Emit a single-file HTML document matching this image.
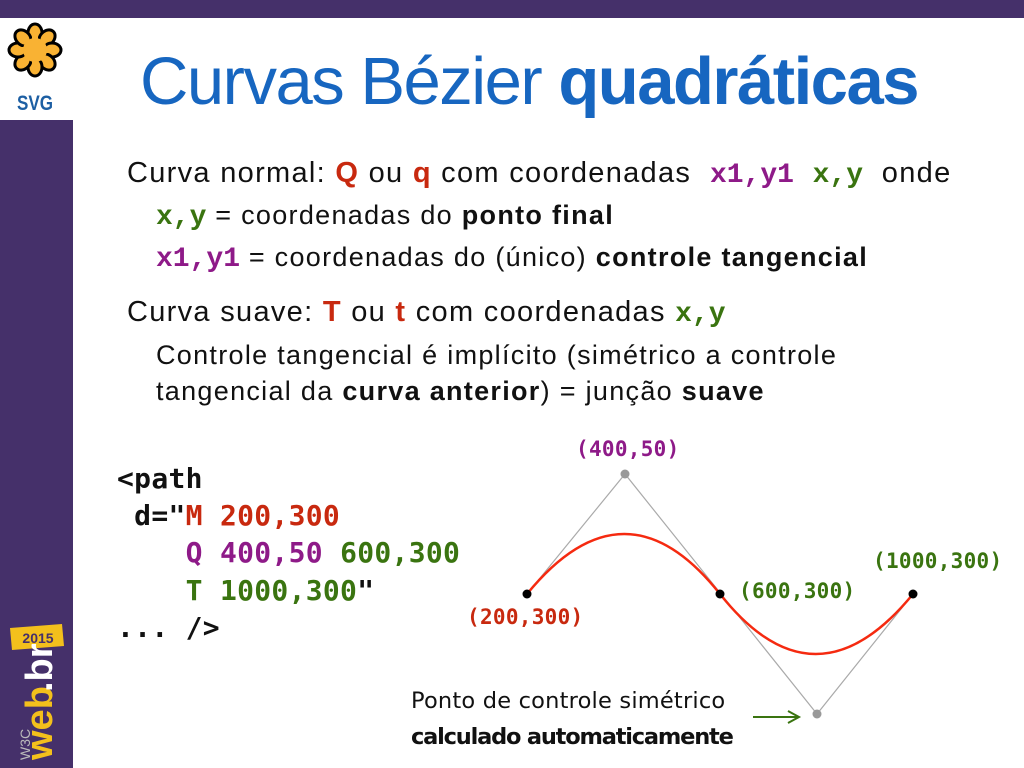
<!DOCTYPE html>
<html><head><meta charset="utf-8"><style>
body{margin:0;width:1024px;height:768px;position:relative;background:#fff;overflow:hidden;font-family:"Liberation Sans",Arial,sans-serif;color:#111}
.a{position:absolute;white-space:pre;line-height:1}
.m{font-family:"Liberation Mono","DejaVu Sans Mono",monospace;font-weight:bold;letter-spacing:0;font-size:28px}
.r{color:#c8290f}.g{color:#3a7410}.p{color:#8e1a88}
b{font-weight:bold}
.t1{font-size:29px;letter-spacing:1.3px}
.t2{font-size:27px;letter-spacing:1.3px}
.code{font-family:"DejaVu Sans Mono",monospace;font-weight:bold;font-size:28px;letter-spacing:0.3px}
.lab{font-family:"DejaVu Sans Mono",monospace;font-weight:bold;font-size:21px;letter-spacing:0.3px}
</style></head><body>
<div style="position:absolute;left:0;top:0;width:1024px;height:18px;background:#45306a"></div>
<div style="position:absolute;left:0;top:120px;width:73px;height:648px;background:#45306a"></div>
<svg style="position:absolute;left:0;top:18px" width="73" height="102">
<g transform="translate(35,32)" fill="#f9b233" stroke="#000" stroke-width="3">
<g id="pt"><ellipse cx="0" cy="-17" rx="7" ry="9"/></g>
<use href="#pt" transform="rotate(45)"/><use href="#pt" transform="rotate(90)"/><use href="#pt" transform="rotate(135)"/><use href="#pt" transform="rotate(180)"/><use href="#pt" transform="rotate(225)"/><use href="#pt" transform="rotate(270)"/><use href="#pt" transform="rotate(315)"/>
<circle r="12" stroke="none"/>
</g>
<g transform="translate(35,32)" stroke="#f9b233" stroke-width="6" stroke-linecap="round">
<line x1="0" y1="-14" x2="0" y2="14"/><line x1="-14" y1="0" x2="14" y2="0"/><line x1="-10" y1="-10" x2="10" y2="10"/><line x1="-10" y1="10" x2="10" y2="-10"/>
</g>
<text x="35" y="92" text-anchor="middle" font-family="Liberation Sans" font-weight="bold" font-size="21" fill="#1d5fa3" textLength="36" lengthAdjust="spacingAndGlyphs">SVG</text>
</svg>
<svg style="position:absolute;left:0;top:620px" width="73" height="148">
<polygon points="10,8 62,4 64,26 12,30" fill="#f3c01c"/>
<text x="38" y="23" text-anchor="middle" font-family="Liberation Sans" font-weight="bold" font-size="14" fill="#45306a">2015</text>
<text transform="translate(52,140) rotate(-90)" font-family="Liberation Sans" font-weight="bold" font-size="38" fill="#f3c01c">web</text>
<text transform="translate(52,72) rotate(-90)" font-family="Liberation Sans" font-weight="bold" font-size="38" fill="#fff">.br</text>
<text transform="translate(30,140) rotate(-90)" font-family="Liberation Sans" font-size="14" fill="#bbb">W3C</text>
</svg>
<div class="a" style="left:140px;top:48px;font-size:67px;letter-spacing:-1.5px;color:#1766c0">Curvas Bézier <b>quadráticas</b></div>
<div class="a t1" style="left:127px;top:159px">Curva normal: <b class="r">Q</b> ou <b class="r">q</b> com coordenadas  <span class="m p">x1,y1</span>  <span class="m g">x,y</span>  onde</div>
<div class="a t2" style="left:156px;top:202px"><span class="m g">x,y</span> = coordenadas do <b>ponto final</b></div>
<div class="a t2" style="left:156px;top:244px"><span class="m p">x1,y1</span> = coordenadas do (único) <b>controle tangencial</b></div>
<div class="a t1" style="left:127px;top:298px">Curva suave: <b class="r">T</b> ou <b class="r">t</b> com coordenadas <span class="m g">x,y</span></div>
<div class="a t2" style="left:156px;top:342px">Controle tangencial é implícito (simétrico a controle</div>
<div class="a t2" style="left:156px;top:378px">tangencial da <b>curva anterior</b>) = junção <b>suave</b></div>
<div class="a code" style="left:117px;top:460px;line-height:37.2px">&lt;path
 d="<span class="r">M 200,300</span>
    <span class="p">Q 400,50</span> <span class="g">600,300</span>
    <span class="g">T 1000,300</span>"
... /&gt;</div>
<svg style="position:absolute;left:0;top:0" width="1024" height="768">
<polyline points="527,594 625,474 817,714 913,594" fill="none" stroke="#aaa" stroke-width="1.2"/>
<path d="M527,594 Q625,474 720,594 T913,594" fill="none" stroke="#f52a10" stroke-width="2.5"/>
<circle cx="527" cy="594" r="4.5" fill="#000"/><circle cx="720" cy="594" r="4.5" fill="#000"/><circle cx="913" cy="594" r="4.5" fill="#000"/>
<circle cx="625" cy="474" r="4.5" fill="#999"/><circle cx="817" cy="714" r="4.5" fill="#999"/>
<line x1="753" y1="717" x2="798" y2="717" stroke="#3a7410" stroke-width="2"/>
<polyline points="788,711 799,717 788,723" fill="none" stroke="#3a7410" stroke-width="2"/>
</svg>
<div class="a lab p" style="left:576px;top:439px">(400,50)</div>
<div class="a lab r" style="left:467px;top:607px">(200,300)</div>
<div class="a lab g" style="left:739px;top:581px">(600,300)</div>
<div class="a lab g" style="left:873px;top:551px">(1000,300)</div>
<div class="a" style="left:411px;top:690px;font-size:22.5px;font-family:'DejaVu Sans',sans-serif;letter-spacing:0.2px">Ponto de controle simétrico</div>
<div class="a" style="left:411px;top:726px;font-size:22.5px;font-family:'DejaVu Sans',sans-serif;font-weight:bold;letter-spacing:-1.2px">calculado automaticamente</div>
</body></html>
